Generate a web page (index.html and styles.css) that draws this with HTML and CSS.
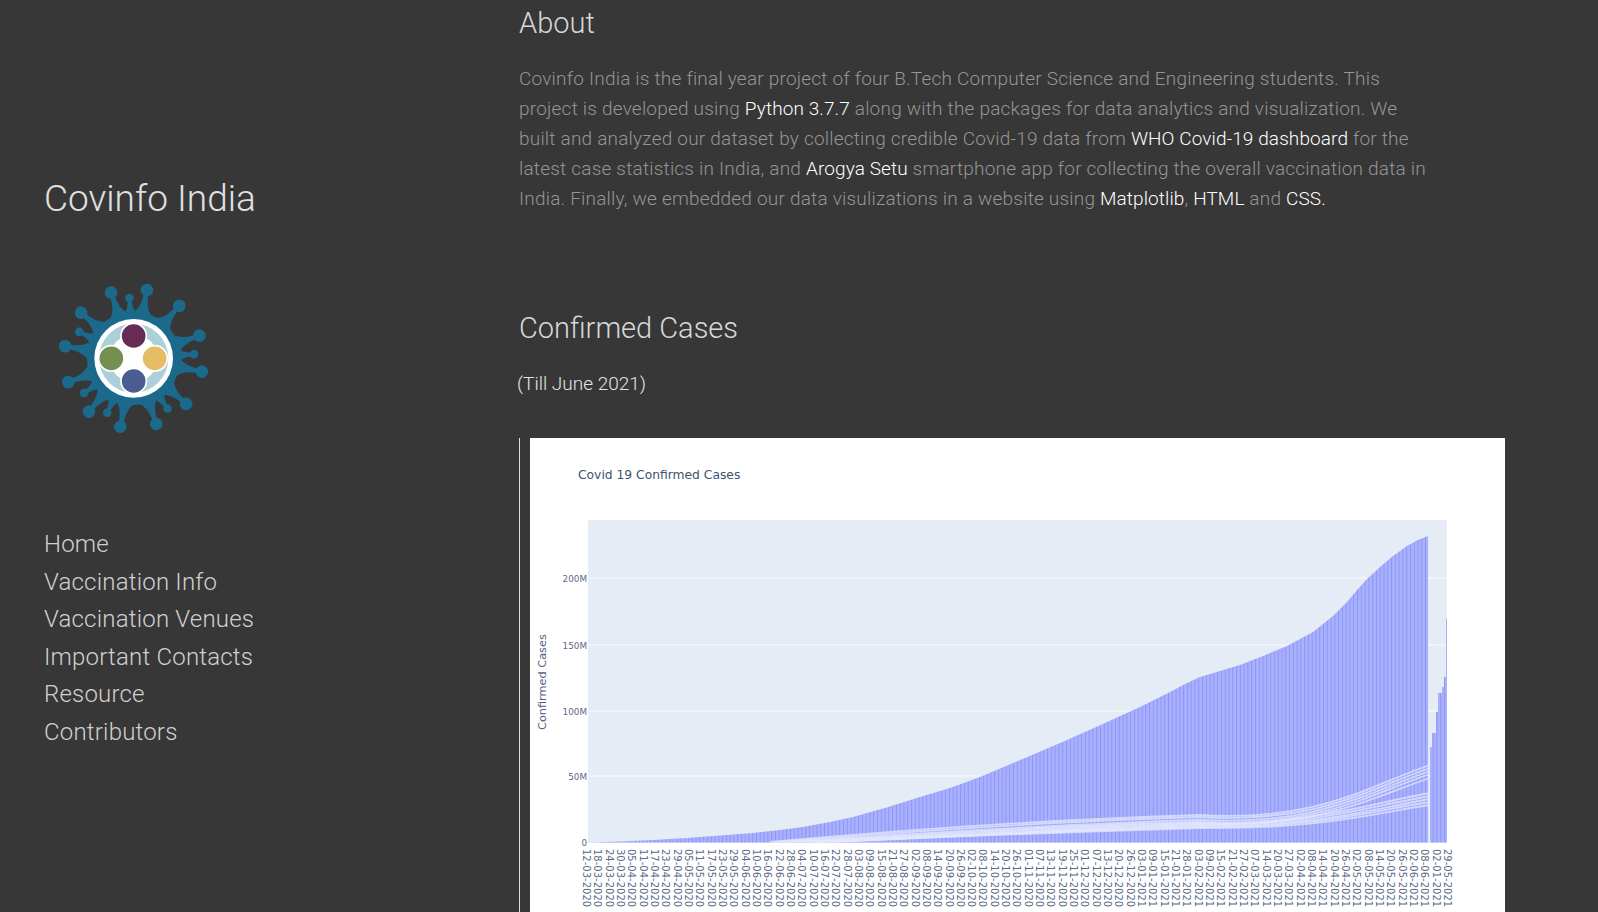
FILE: index.html
```html
<!DOCTYPE html>
<html lang="en">
<head>
    <meta charset="UTF-8">
    <meta name="viewport" content="width=device-width, initial-scale=1.0">
    <title>Covinfo India</title>
    <link rel="stylesheet" href="styles.css">
</head>
<body>

<div class="sidebar">
    <h1 class="site-title">Covinfo India</h1>

    <svg class="logo" viewBox="0 0 570 540" width="190" height="180">
        <defs>
            <path id="spike-long" d="M-44-126Q-10-138-7-191A19 19 0 1 1 7-191Q10-138 44-126Z"/>
            <path id="spike-short" d="M-32-128Q-8-138-6-170A13 13 0 1 1 6-170Q8-138 32-128Z"/>
        </defs>
        <g transform="translate(281 265)" fill="#1b6a8c">
            <circle r="140"/>
            <use href="#spike-long" transform="rotate(-19)"/>
            <use href="#spike-short" transform="rotate(-4)"/>
            <use href="#spike-long" transform="rotate(11)"/>
            <use href="#spike-long" transform="rotate(41)"/>
            <use href="#spike-long" transform="rotate(71)"/>
            <use href="#spike-short" transform="rotate(86)"/>
            <use href="#spike-long" transform="rotate(101)"/>
            <use href="#spike-long" transform="rotate(131)"/>
            <use href="#spike-short" transform="rotate(146)"/>
            <use href="#spike-long" transform="rotate(161)"/>
            <use href="#spike-long" transform="rotate(191)"/>
            <use href="#spike-short" transform="rotate(206)"/>
            <use href="#spike-long" transform="rotate(220)"/>
            <use href="#spike-short" transform="rotate(235)"/>
            <use href="#spike-long" transform="rotate(250)"/>
            <use href="#spike-long" transform="rotate(280)"/>
            <use href="#spike-short" transform="rotate(296)"/>
            <use href="#spike-long" transform="rotate(311)"/>
            <circle r="118" fill="#fff"/>
            <circle r="104" fill="#abd0da"/>
            <circle r="72" fill="#fff"/>
            <g stroke="#fff" stroke-width="5">
                <circle cy="-67" r="38" fill="#652d53"/>
                <circle cx="63" r="38" fill="#e5bd66"/>
                <circle cy="68" r="38" fill="#4a5d90"/>
                <circle cx="-67" r="38" fill="#738f52"/>
            </g>
        </g>
    </svg>

    <nav class="menu">
        <a href="#">Home</a>
        <a href="#">Vaccination Info</a>
        <a href="#">Vaccination Venues</a>
        <a href="#">Important Contacts</a>
        <a href="#">Resource</a>
        <a href="#">Contributors</a>
    </nav>
</div>

<div class="main">
    <h2 class="about-title">About</h2>
    <p class="about-text">
        Covinfo India is the final year project of four B.Tech Computer Science and Engineering students. This
        project is developed using <b>Python 3.7.7</b> along with the packages for data analytics and visualization. We
        built and analyzed our dataset by collecting credible Covid-19 data from <b>WHO Covid-19 dashboard</b> for the
        latest case statistics in India, and <b>Arogya Setu</b> smartphone app for collecting the overall vaccination data in
        India. Finally, we embedded our data visulizations in a website using <b>Matplotlib</b>, <b>HTML</b> and <b>CSS.</b>
    </p>

    <h2 class="cases-title">Confirmed Cases</h2>
    <p class="till">(Till June 2021)</p>

    <div class="chart-box">
        <div class="chart">
            <svg class="plot" viewBox="530 438 975 405" width="975" height="405">
                <defs>
                    <pattern id="bars" patternUnits="userSpaceOnUse" width="3.78" height="10">
                        <rect width="3.78" height="10" fill="#a9b1fc"/>
                        <rect width="1" height="10" fill="#8c95fa"/>
                    </pattern>
                </defs>
                <text class="chart-title" x="578" y="479">Covid 19 Confirmed Cases</text>
                <text class="axis-title" transform="translate(546 730) rotate(-90)">Confirmed Cases</text>

                <rect x="588" y="520" width="859" height="323" fill="#e5ecf6"/>
                <g stroke="#f3f6fb" stroke-width="1.3">
                    <line x1="588" y1="578" x2="1447" y2="578"/>
                    <line x1="588" y1="645" x2="1447" y2="645"/>
                    <line x1="588" y1="711" x2="1447" y2="711"/>
                    <line x1="588" y1="776" x2="1447" y2="776"/>
                </g>

                <g class="tick" text-anchor="end">
                    <text x="587" y="582">200M</text>
                    <text x="587" y="649">150M</text>
                    <text x="587" y="715">100M</text>
                    <text x="587" y="780">50M</text>
                    <text x="587" y="846">0</text>
                </g>

                <polygon fill="url(#bars)" points="590,842.5 620,841.5 653,840 687,838 720,835.5 753,833 780,830 803,827 830,822 853,817 885,808 920,797 950,788 980,777 1025,758 1067,740 1105,723 1140,707 1170,692 1185,684 1200,677 1220,671 1240,665 1263,656 1287,646 1313,632 1333,616 1347,602 1358,589 1367,579 1380,567 1393,556 1407,546 1418,540 1428,536 1428,842.5 1430,842.5 1430,747 1432,747 1432,733 1436,733 1436,712 1438,712 1438,693 1442,693 1442,687 1444,687 1444,677 1446,677 1446,619 1447,619 1447,842.5"/>

                <g fill="none" stroke="#e3e8fc" stroke-width="1.8" stroke-opacity=".75">
                    <path d="M770 842C880 832 1030 820 1200 815C1320 822 1370 785 1430 765"/>
                    <path d="M775 842C880 834 1030 822 1200 817C1320 824 1370 788 1430 768"/>
                    <path d="M780 842C890 836 1030 825 1200 820C1320 826 1370 791 1430 771"/>
                    <path d="M785 842C900 837 1030 826 1200 822C1320 828 1370 794 1430 774"/>
                    <path d="M790 842C910 838 1030 827 1200 823C1320 829 1370 798 1430 778"/>
                    <path d="M800 842C920 838 1040 829 1200 824C1310 826 1370 803 1430 793"/>
                    <path d="M810 842C925 838 1040 830 1200 825C1310 827 1370 806 1430 796"/>
                    <path d="M815 842C925 838 1020 832 1200 826C1315 828 1375 808 1430 799"/>
                    <path d="M820 842C925 838 1010 833 1200 827C1315 829 1375 810 1430 802"/>
                    <path d="M830 842C925 838 1000 834 1200 828C1320 830 1380 812 1430 805"/>
                </g>
            </svg>
            <div class="x-labels">
                <span>12-03-2020</span><span>18-03-2020</span><span>24-03-2020</span><span>30-03-2020</span>
                <span>05-04-2020</span><span>11-04-2020</span><span>17-04-2020</span><span>23-04-2020</span>
                <span>29-04-2020</span><span>05-05-2020</span><span>11-05-2020</span><span>17-05-2020</span>
                <span>23-05-2020</span><span>29-05-2020</span><span>04-06-2020</span><span>10-06-2020</span>
                <span>16-06-2020</span><span>22-06-2020</span><span>28-06-2020</span><span>04-07-2020</span>
                <span>10-07-2020</span><span>16-07-2020</span><span>22-07-2020</span><span>28-07-2020</span>
                <span>03-08-2020</span><span>09-08-2020</span><span>15-08-2020</span><span>21-08-2020</span>
                <span>27-08-2020</span><span>02-09-2020</span><span>08-09-2020</span><span>14-09-2020</span>
                <span>20-09-2020</span><span>26-09-2020</span><span>02-10-2020</span><span>08-10-2020</span>
                <span>14-10-2020</span><span>20-10-2020</span><span>26-10-2020</span><span>01-11-2020</span>
                <span>07-11-2020</span><span>13-11-2020</span><span>19-11-2020</span><span>25-11-2020</span>
                <span>01-12-2020</span><span>07-12-2020</span><span>13-12-2020</span><span>20-12-2020</span>
                <span>26-12-2020</span><span>03-01-2021</span><span>09-01-2021</span><span>15-01-2021</span>
                <span>21-01-2021</span><span>28-01-2021</span><span>03-02-2021</span><span>09-02-2021</span>
                <span>15-02-2021</span><span>21-02-2021</span><span>27-02-2021</span><span>07-03-2021</span>
                <span>14-03-2021</span><span>20-03-2021</span><span>27-03-2021</span><span>02-04-2021</span>
                <span>08-04-2021</span><span>14-04-2021</span><span>20-04-2021</span><span>26-04-2021</span>
                <span>02-05-2021</span><span>08-05-2021</span><span>14-05-2021</span><span>20-05-2021</span>
                <span>26-05-2021</span><span>02-06-2021</span><span>08-06-2021</span><span>02-01-2021</span>
                <span>29-05-2021</span>
            </div>
        </div>
    </div>
</div>

</body>
</html>
```

FILE: styles.css
```css
/* Global */
html, body {
    height: 100%;
    margin: 0;
    overflow: hidden;
}

body {
    display: flex;
    background-color: #373737;
    font-family: 'Roboto', sans-serif;
    font-weight: 300;
}

/* Sidebar */
.sidebar {
    width: 475px;
    padding: 176px 0 0 44px;
    flex-shrink: 0;
}

.site-title {
    margin: 0;
    font-size: 37px;
    line-height: 46px;
    font-weight: 300;
    color: #e0e0e0;
}

.logo {
    display: block;
    margin: 48px 0 0 -4px;
}

.menu {
    display: flex;
    flex-direction: column;
    margin-top: 76px;
}

.menu a {
    font-size: 24px;
    line-height: 37.5px;
    letter-spacing: 0.2px;
    color: #d0d0d0;
    text-decoration: none;
}

/* Main content */
.main {
    flex: 1;
    height: 100vh;
}

.about-title,
.cases-title {
    margin: 0;
    font-size: 29px;
    line-height: 36px;
    font-weight: 300;
    color: #d8d8d8;
}

.about-title {
    margin-top: 5px;
}

.about-text {
    width: 915px;
    margin: 23px 0 0;
    font-size: 19px;
    line-height: 30px;
    letter-spacing: 0.21px;
    color: #959595;
}

.about-text b {
    font-weight: 300;
    letter-spacing: 0.1px;
    color: #fff;
}

.cases-title {
    margin-top: 96px;
}

.till {
    margin: 23px 0 0 -2px;
    font-size: 19px;
    line-height: 30px;
    color: #e4e4e4;
}

/* Chart */
.chart-box {
    margin-top: 39px;
    padding-left: 10px;
    border-left: 1px solid #ddd;
}

.chart {
    width: 975px;
    height: 474px;
    background-color: #fff;
}

.plot {
    display: block;
    overflow: visible;
}

.chart-title {
    font-family: 'DejaVu Sans', sans-serif;
    font-size: 12.3px;
    font-weight: 400;
    fill: #3e5170;
}

.axis-title {
    font-family: 'DejaVu Sans', sans-serif;
    font-size: 11.3px;
    font-weight: 400;
    fill: #506280;
}

.tick text {
    font-family: 'DejaVu Sans', sans-serif;
    font-size: 8.8px;
    font-weight: 400;
    fill: #5a6b87;
}

.x-labels {
    display: flex;
    justify-content: space-between;
    width: 872px;
    margin: 6px 0 0 51px;
    font-family: 'DejaVu Sans', sans-serif;
    font-size: 10px;
    font-weight: 400;
    color: #5a6b87;
}

.x-labels span {
    writing-mode: vertical-rl;
    width: 11px;
    line-height: 11px;
}
```
